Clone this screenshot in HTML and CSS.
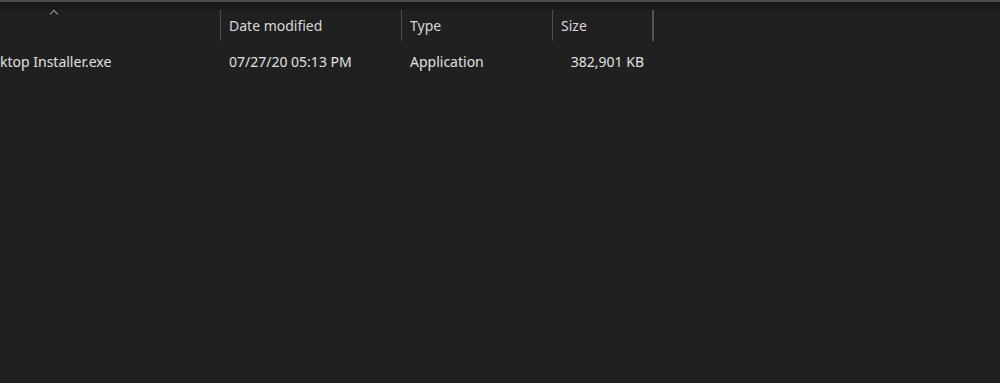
FILE: index.html
```html
<!DOCTYPE html>
<html lang="en">
<head>
  <meta charset="UTF-8">
  <title>Downloads</title>
  <link rel="stylesheet" href="styles.css">
</head>
<body>
  <div class="topEdge"></div>
  <div class="listView">
    <div class="headerRow">
      <div class="col colName"><span class="sortCaret"></span></div>
      <div class="col colDate">Date modified</div>
      <div class="col colType">Type</div>
      <div class="col colSize">Size</div>
    </div>
    <div class="fileRow">
      <div class="col colName">ktop Installer.exe</div>
      <div class="col colDate">07/27/20 05:13 PM</div>
      <div class="col colType">Application</div>
      <div class="col colSize sizeValue">382,901 KB</div>
    </div>
  </div>
</body>
</html>
```

FILE: styles.css
```css
body {
  margin: 0;
  height: 383px;
  background-color: #202020;
  font-family: "Noto Sans", "Open Sans", Arial, sans-serif;
  font-size: 14px;
  color: #dcdcdc;
  overflow: hidden;
}
.topEdge {
  height: 2px;
  background-color: #4a4a4a;
  border-bottom: 7px solid #191919;
}
.headerRow {
  display: flex;
  height: 33px;
}
.headerRow .col {
  border-right: 1px solid #4c4c4c;
  margin: 1px 0 1px 0;
  padding-top: 6px;
  box-sizing: border-box;
  color: #d8d8d8;
}
.col {
  padding-left: 8px;
  box-sizing: border-box;
  white-space: nowrap;
}
.colName {
  width: 221px;
  position: relative;
}
.colDate {
  width: 181px;
}
.colType {
  width: 151px;
}
.colSize {
  width: 101px;
}
.headerRow .colSize {
  border-right: 2px solid #555;
}
.sortCaret {
  position: absolute;
  left: 51px;
  top: 1px;
  width: 5px;
  height: 5px;
  border-left: 1px solid #9a9a9a;
  border-top: 1px solid #9a9a9a;
  transform: rotate(45deg);
}
.fileRow {
  display: flex;
  margin-top: 8px;
  height: 24px;
  line-height: 24px;
  color: #e0e0e0;
}
.fileRow .colName {
  padding-left: 0;
}
.sizeValue {
  text-align: right;
  padding-right: 10px;
}
```
